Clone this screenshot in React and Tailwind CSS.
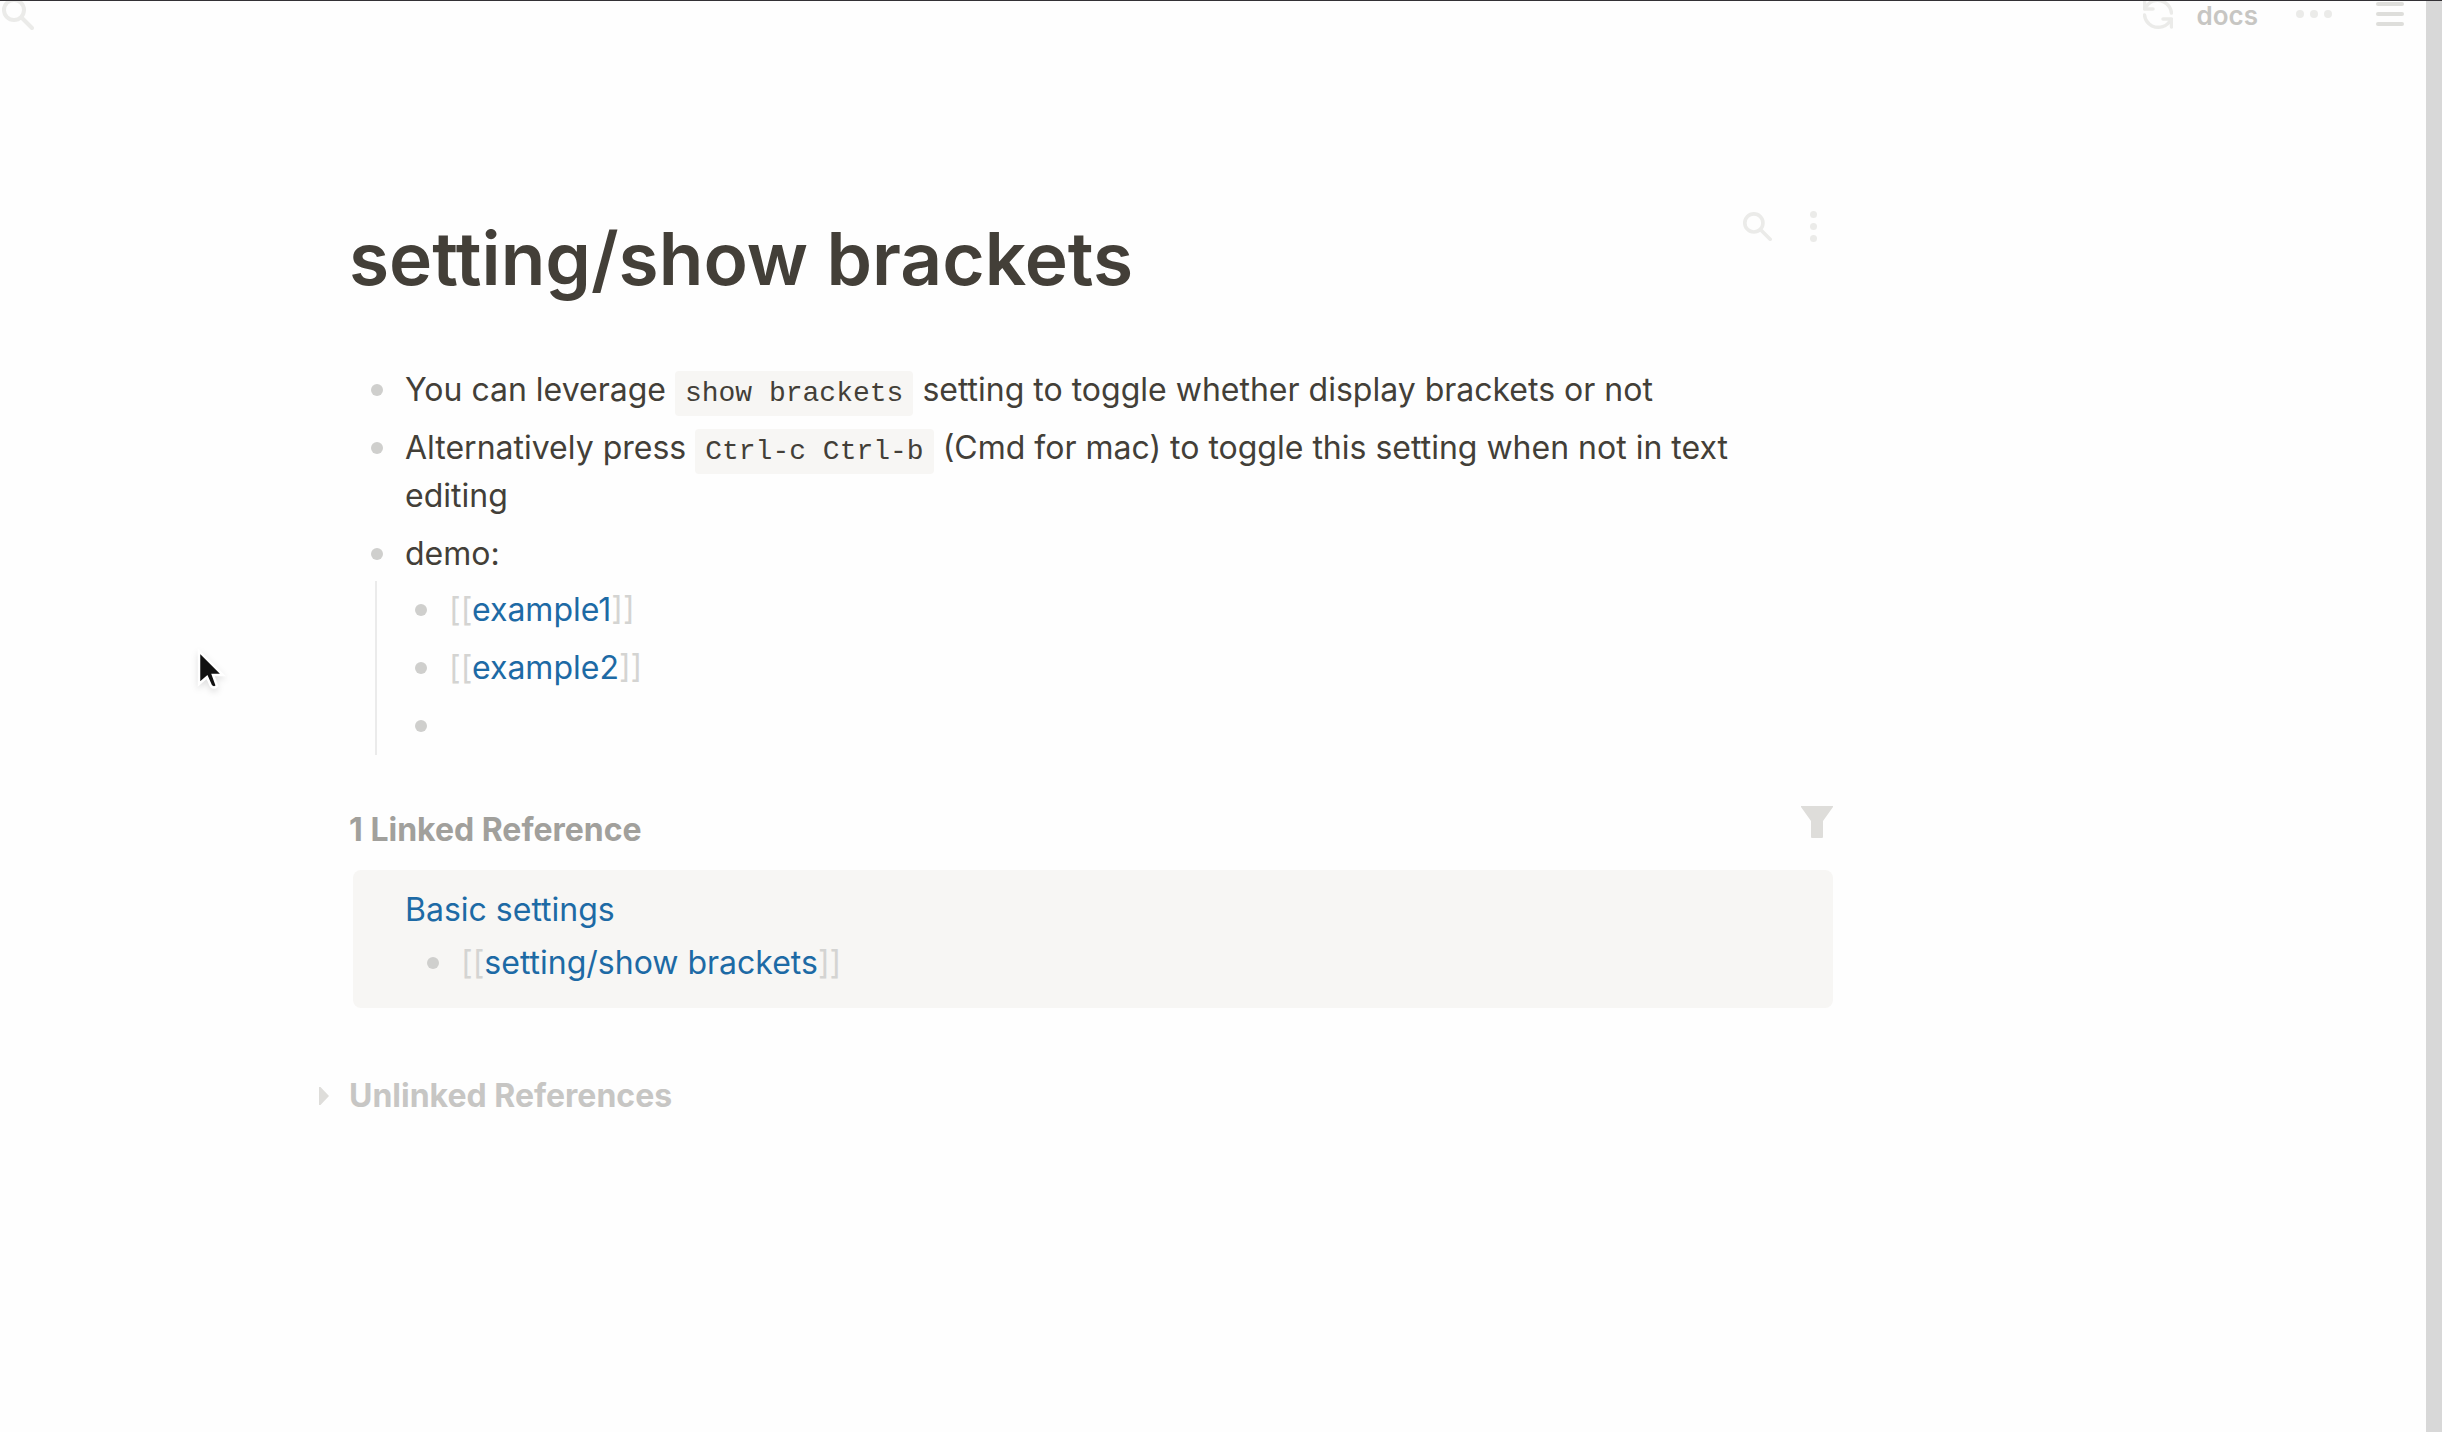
function SearchIcon({ className }) {
  return (
    <svg viewBox="0 0 32 32" fill="none" stroke="currentColor" strokeWidth="4" strokeLinecap="round" className={className}>
      <circle cx="12" cy="12" r="10" />
      <path d="M19.5 19.5 L30 30" />
    </svg>
  );
}

function SyncIcon() {
  return (
    <svg viewBox="0 0 30 32" fill="none" stroke="currentColor" strokeWidth="3.500" strokeLinecap="round" strokeLinejoin="round" className="h-8 w-[30px]">
      <path d="M1.500 3 V11 H10" />
      <path d="M2 10.500 C6 3 14 0 21 4 C25.500 6.500 28 10.500 28.500 15" />
      <path d="M28.500 29 V21 H20" />
      <path d="M28 21.500 C24 29 16 31 9 28 C4.500 25.500 2 21.500 1.500 17" />
    </svg>
  );
}

function Brackets({ children }) {
  return (
    <>
      <span className="text-[#d4d4d2]">[[</span>
      <a href="#page" className="text-[#1d6aa5]">{children}</a>
      <span className="text-[#d4d4d2]">]]</span>
    </>
  );
}

function Code({ children }) {
  return (
    <code className="rounded bg-[#f7f6f4] px-[10px] py-[7px] font-['Liberation_Mono',monospace] text-[28px] leading-8">
      {children}
    </code>
  );
}

function Block({ children }) {
  return (
    <li className="flex items-start gap-[22px] py-[5px]">
      <span className="flex h-12 w-3 shrink-0 items-center">
        <span className="size-3 rounded-full bg-[#cfcfcd]" />
      </span>
      <div className="min-h-12 min-w-0 flex-1">{children}</div>
    </li>
  );
}

export default function App() {
  return (
    <div className="flex min-h-screen bg-[#fefefe] font-['Inter',sans-serif] text-[32px] leading-[48px] text-[#433f38]">
      <div className="min-w-0 flex-1 border-t border-[#333135]">
        <header className="flex h-8 items-start justify-between overflow-hidden pl-[2px] pr-[22px] text-[#ebebe9]">
          <button aria-label="Search" className="-mt-[3px]">
            <SearchIcon className="size-8" />
          </button>
          <div className="flex items-start">
            <button aria-label="Refresh" className="-mt-[3px]">
              <SyncIcon />
            </button>
            <button className="ml-6 text-[26px] font-semibold leading-[30px] text-[#c7c6c3]">docs</button>
            <button aria-label="More" className="ml-[38px] flex h-[26px] items-center gap-[6px]">
              <span className="size-2 rounded-full bg-current" />
              <span className="size-2 rounded-full bg-current" />
              <span className="size-2 rounded-full bg-current" />
            </button>
            <button aria-label="Menu" className="ml-11 flex h-[26px] w-7 flex-col justify-center gap-[6px]">
              <span className="h-1 w-full rounded-full bg-[#dededb]" />
              <span className="h-1 w-full rounded-full bg-[#dededb]" />
              <span className="h-1 w-full rounded-full bg-[#dededb]" />
            </button>
          </div>
        </header>

        <main className="ml-[349px] mt-[178px] max-w-[1484px]">
          <div className="flex items-start justify-between">
            <h1 className="text-[73px] font-semibold leading-[96px]">setting/show brackets</h1>
            <div className="flex items-center gap-[38px] pr-4 text-[#ebebe9]">
              <button aria-label="Search in page">
                <SearchIcon className="size-[29px]" />
              </button>
              <button aria-label="Page options" className="flex flex-col gap-[5px]">
                <span className="size-[7px] rounded-full bg-current" />
                <span className="size-[7px] rounded-full bg-current" />
                <span className="size-[7px] rounded-full bg-current" />
              </button>
            </div>
          </div>

          <ul className="mt-[54px] pl-[22px] pr-16">
            <Block>
              You can leverage <Code>show brackets</Code> setting to toggle whether display brackets or not
            </Block>
            <Block>
              Alternatively press <Code>Ctrl-c Ctrl-b</Code> (Cmd for mac) to toggle this setting when not in text editing
            </Block>
            <Block>demo:</Block>
            <li className="-mt-[2px] ml-1 border-l-2 border-[#ebebeb]">
              <ul className="pl-[38px]">
                <Block><Brackets>example1</Brackets></Block>
                <Block><Brackets>example2</Brackets></Block>
                <Block />
              </ul>
            </li>
          </ul>

          <section className="mt-[51px]">
            <div className="flex items-start justify-between">
              <h2 className="font-bold text-[#a1a09c]">1 Linked Reference</h2>
              <button aria-label="Filter" className="text-[#deddda]">
                <svg viewBox="0 0 32 32" fill="currentColor" className="size-8">
                  <path d="M0 0 H32 V1 L22 15 V31 Q22 32 21 32 H11 Q10 32 10 31 V15 L0 1 Z" />
                </svg>
              </button>
            </div>
            <div className="ml-1 mt-4 rounded-lg bg-[#f7f6f4] py-4 pl-[52px]">
              <a href="#basic" className="text-[#1d6aa5]">Basic settings</a>
              <ul className="pl-[22px]">
                <Block><Brackets>setting/show brackets</Brackets></Block>
              </ul>
            </div>
          </section>

          <section className="-ml-[30px] mt-16">
            <button className="flex items-center gap-5 font-bold text-[#c7c6c4]">
              <svg viewBox="0 0 10 18" className="h-[18px] w-[10px] text-[#deddda]" fill="currentColor">
                <path d="M0 0 H1.500 L10 9 L1.500 18 H0 Z" />
              </svg>
              Unlinked References
            </button>
          </section>
        </main>
      </div>
      <div className="w-4 shrink-0 border-t border-[#333135] bg-[#d8d8d8]" />

      <svg viewBox="0 0 30 44" className="pointer-events-none absolute left-[197px] top-[649px] h-11 w-[30px] drop-shadow-md">
        <path d="M2 2 V35 L10 28 L14 37 Q17 40 20 37 L16 26 H26 Z" fill="#111" stroke="#fff" strokeWidth="2.500" />
      </svg>
    </div>
  );
}
